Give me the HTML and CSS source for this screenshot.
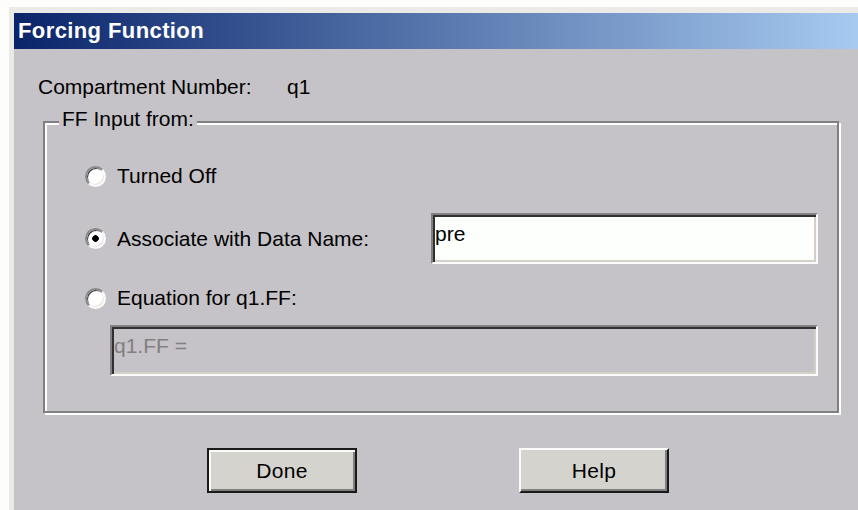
FILE: index.html
```html
<!DOCTYPE html>
<html>
<head>
<meta charset="utf-8">
<title>Forcing Function</title>
<link rel="stylesheet" href="styles.css">
</head>
<body>
<div class="window">
  <div class="titlebar">Forcing Function</div>
  <div class="client">
    <div class="info-row">
      <span class="info-label">Compartment Number:</span>
      <span class="info-value">q1</span>
    </div>
    <fieldset class="group">
      <legend class="group-title">FF Input from:</legend>
      <label class="option opt-off">
        <input type="radio" name="src" class="radio">
        <span>Turned Off</span>
      </label>
      <div class="option-line opt-data">
        <label class="option">
          <input type="radio" name="src" class="radio" checked>
          <span>Associate with Data Name:</span>
        </label>
        <input type="text" class="field" value="pre">
      </div>
      <label class="option opt-eq">
        <input type="radio" name="src" class="radio">
        <span>Equation for q1.FF:</span>
      </label>
      <input type="text" class="field field-disabled" value="q1.FF =" disabled>
    </fieldset>
    <div class="buttons">
      <button class="btn btn-default">Done</button>
      <button class="btn">Help</button>
    </div>
  </div>
</div>
</body>
</html>
```
FILE: styles.css
```css
html, body {
  margin: 0;
  padding: 0;
  background: #fdfdfb;
  overflow: hidden;
  width: 858px;
  height: 510px;
}

body {
  font-family: "Liberation Sans", Arial, sans-serif;
  font-size: 21px;
  color: #000;
}

.window {
  margin: 7px 0 0 9px;
  border-top: 6px solid #eceae6;
  border-left: 5px solid #eceae6;
  background: #c5c3c7;
  height: 520px;
}

.titlebar {
  height: 36px;
  line-height: 36px;
  padding-left: 4px;
  background: linear-gradient(90deg, #0a246a 0%, #a6caf0 100%);
  color: #fff;
  font-weight: bold;
  font-size: 22px;
  letter-spacing: 0.4px;
}

.client {
  padding-top: 26px;
}

.info-row {
  display: flex;
  line-height: 24px;
  padding-left: 24px;
}

.info-label {
  width: 249px;
}

/* etched group box: grey line with a white line beside it */
.group {
  margin: 8px 19px 0 29px;
  padding: 0 19px 35px 14px;
  border: 2px solid #808080;
  box-shadow: inset 2px 2px 0 #fff, 2px 2px 0 #fff;
  display: flex;
  flex-direction: column;
  min-width: 0;
}

.group-title {
  margin-left: 0;
  padding: 0 3px 5px;
  line-height: 24px;
  background: #c5c3c7;
}

.option {
  display: flex;
  align-items: center;
  gap: 11px;
  line-height: 24px;
}

.opt-off,
.opt-eq {
  margin-left: 26px;
}

.opt-off {
  margin-top: 28px;
}

.option-line {
  display: flex;
  align-items: center;
  justify-content: space-between;
  margin: 25px 0 0 26px;
}

.opt-eq {
  margin-top: 22px;
}

.radio {
  appearance: none;
  -webkit-appearance: none;
  margin: 0;
  width: 21px;
  height: 21px;
  border-radius: 50%;
  border: 2px solid;
  border-color: #8a8a8a #fbfbf9 #fbfbf9 #8a8a8a;
  box-shadow: inset 1px 1px 0 #404040, inset -1px -1px 0 #e4e2de;
  background: #fff;
  flex: none;
}

.radio:checked {
  background: radial-gradient(circle, #000 0 3px, #fff 3.6px);
}

/* sunken edit box */
.field {
  box-sizing: border-box;
  width: 387px;
  height: 51px;
  margin: 0;
  padding: 0 1px 10px 2px;
  border: 2px solid;
  border-color: #808080 #fbfbf9 #fbfbf9 #808080;
  box-shadow: inset 2px 2px 0 #303030, inset -2px -2px 0 #d4d0c8;
  background: #fcfffc;
  font-family: "Liberation Sans", Arial, sans-serif;
  font-size: 21px;
  color: #000;
  outline: none;
}

.field-disabled {
  width: auto;
  align-self: stretch;
  margin: 15px 0 0 51px;
  background: #c5c3c7;
  color: #808080;
  -webkit-text-fill-color: #808080;
}

.buttons {
  display: flex;
  gap: 162px;
  padding-left: 193px;
  margin-top: 35px;
}

.btn {
  box-sizing: border-box;
  width: 150px;
  height: 45px;
  margin: 0;
  padding: 0;
  background: #d4d3ce;
  border: 2px solid;
  border-color: #fbfbf9 #1a1a1a #1a1a1a #fbfbf9;
  box-shadow: inset -2px -2px 0 #808080;
  font-family: "Liberation Sans", Arial, sans-serif;
  font-size: 21px;
  letter-spacing: 0.3px;
  color: #000;
}

.btn-default {
  border: 2px solid #1a1a1a;
  box-shadow: inset 2px 2px 0 #fbfbf9, inset -2px -2px 0 #808080;
}
```
